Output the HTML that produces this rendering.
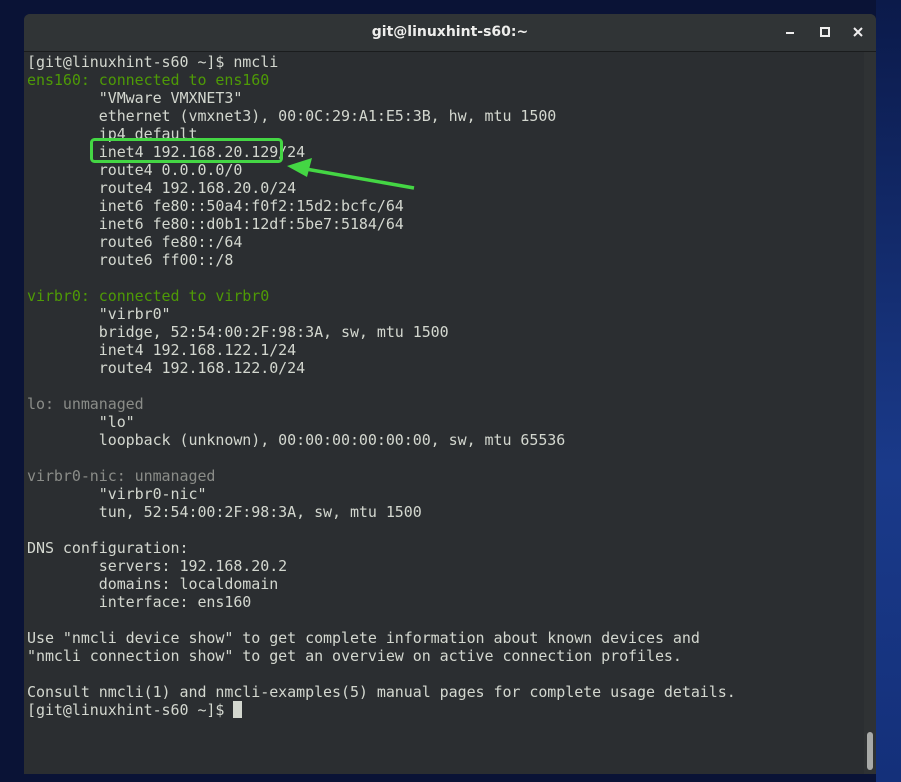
<!DOCTYPE html>
<html><head><meta charset="utf-8"><style>
html,body{margin:0;padding:0;width:901px;height:782px;overflow:hidden;background:#0a1336;}
.bgr{position:absolute;right:0;top:0;width:25px;height:782px;background:linear-gradient(180deg,#0b1a4a,#1a3a8a 60%,#14307a);}
.win{position:absolute;left:24px;top:14px;width:852px;height:760px;background:#2b2e31;border-radius:6px 6px 0 0;overflow:hidden;}
.tb{position:absolute;left:0;top:0;width:852px;height:37px;background:#303436;border-bottom:1px solid #1a1c1d;color:#eeeeec;font:bold 14px "DejaVu Sans","Liberation Sans",sans-serif;text-align:center;line-height:37px;}
pre{position:absolute;left:3px;top:39px;margin:0;font:15px "DejaVu Sans Mono","Liberation Mono",monospace;line-height:18px;color:#d3d7cf;letter-spacing:-0.06px;}
.g{color:#4e9a06}.d{color:#8a8c88}
.cur{display:inline-block;width:9px;height:17px;background:#d3d7cf;vertical-align:-3px}
.sb{position:absolute;left:840px;top:38px;width:12px;height:722px;background:#2f3234;}
.th{position:absolute;left:843px;top:718px;width:6px;height:38px;background:#a8aaa8;border-radius:3px;}
</style></head><body>
<div class="bgr"></div>
<div class="win">
<div class="tb">git@linuxhint-s60:~</div>
<svg style="position:absolute;left:0;top:0" width="852" height="37">
<rect x="762" y="18" width="8" height="2" fill="#eee"/>
<rect x="797" y="14" width="8" height="8" fill="none" stroke="#eee" stroke-width="2"/>
<path d="M830 14l8 8M838 14l-8 8" stroke="#eee" stroke-width="2"/>
</svg>
<pre>[git@linuxhint-s60 ~]$ nmcli
<span class="g">ens160: connected to ens160</span>
        "VMware VMXNET3"
        ethernet (vmxnet3), 00:0C:29:A1:E5:3B, hw, mtu 1500
        ip4 default
        inet4 192.168.20.129/24
        route4 0.0.0.0/0
        route4 192.168.20.0/24
        inet6 fe80::50a4:f0f2:15d2:bcfc/64
        inet6 fe80::d0b1:12df:5be7:5184/64
        route6 fe80::/64
        route6 ff00::/8

<span class="g">virbr0: connected to virbr0</span>
        "virbr0"
        bridge, 52:54:00:2F:98:3A, sw, mtu 1500
        inet4 192.168.122.1/24
        route4 192.168.122.0/24

<span class="d">lo: unmanaged</span>
        "lo"
        loopback (unknown), 00:00:00:00:00:00, sw, mtu 65536

<span class="d">virbr0-nic: unmanaged</span>
        "virbr0-nic"
        tun, 52:54:00:2F:98:3A, sw, mtu 1500

DNS configuration:
        servers: 192.168.20.2
        domains: localdomain
        interface: ens160

Use "nmcli device show" to get complete information about known devices and
"nmcli connection show" to get an overview on active connection profiles.

Consult nmcli(1) and nmcli-examples(5) manual pages for complete usage details.
[git@linuxhint-s60 ~]$ <span class="cur"></span></pre>
<div class="sb"></div><div class="th"></div>
</div>
<svg style="position:absolute;left:0;top:0" width="901" height="782">
<rect x="91.5" y="139.5" width="190" height="22" rx="3" fill="none" stroke="#44d644" stroke-width="3"/>
<path d="M414 188L300 168" stroke="#44d644" stroke-width="3.5"/>
<path d="M287 166L312 158L307 177Z" fill="#44d644"/>
</svg>
</body></html>
